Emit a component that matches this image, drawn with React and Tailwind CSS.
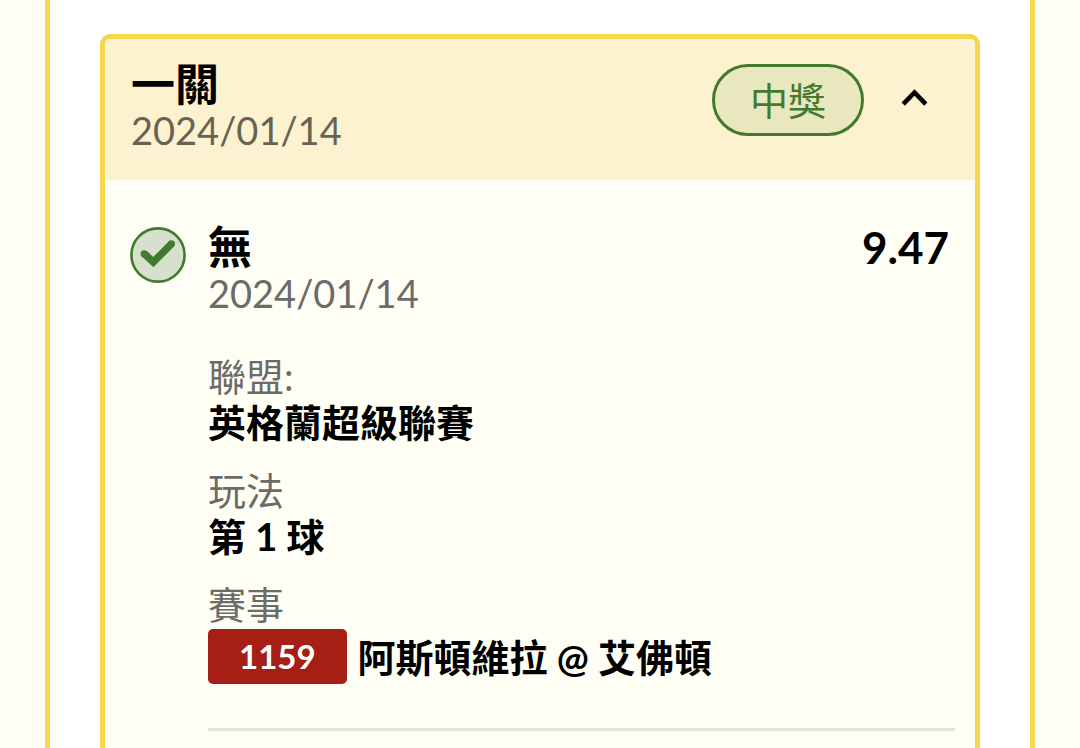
function Chevron() {
  return (
    <svg viewBox="0 0 40 40" className="size-10" fill="none" stroke="#000" strokeWidth="4.6" aria-hidden="true">
      <path d="M8.2 24.2 19.5 12.5 30.8 24.2" />
    </svg>
  );
}

function WonIcon() {
  return (
    <svg viewBox="0 0 56 56" className="size-14 shrink-0" role="img" aria-label="中獎">
      <circle cx="28" cy="28" r="26.6" fill="#d6e0cc" stroke="#427a2d" strokeWidth="2.6" />
      <path d="M14.4 26.8 23.3 35.2 41.3 17" fill="none" stroke="#427a2d" strokeWidth="7.4" />
      <circle cx="14.2" cy="26.8" r="3.6" fill="#427a2d" />
      <circle cx="41.4" cy="16.8" r="3.6" fill="#427a2d" />
    </svg>
  );
}

function Field({ label, children }) {
  return (
    <div>
      <dt className="text-[#6b6b68]">{label}</dt>
      <dd className="font-bold text-black">{children}</dd>
    </div>
  );
}

export default function App() {
  return (
    <div className="flex min-h-screen bg-[#fefef5] px-[45px] font-[Lato,'Noto_Sans_CJK_TC',sans-serif] text-[38px] leading-[46px]">
      <main className="flex flex-1 flex-col border-x-5 border-[#f5d850] bg-white px-[50px] pt-[34px]">
        <section className="flex-1 rounded-t-[10px] border-5 border-b-0 border-[#f5d850] bg-[#fefef5]">
          <header className="flex items-start justify-between rounded-t-[5px] bg-[#fdf2cf] pt-[22px] pr-10 pb-[27px] pl-[26px]">
            <div>
              <h2 className="text-[44px] font-bold text-black">一關</h2>
              <time dateTime="2024-01-14" className="block text-[#666354]">2024/01/14</time>
            </div>
            <div className="flex items-center gap-[31px] pt-[3px]">
              <span className="rounded-full border-3 border-[#427a2d] bg-[#e8e7be] px-[35px] py-[10px] text-[#427a2d]">
                中獎
              </span>
              <button type="button" aria-label="收合" aria-expanded="true">
                <Chevron />
              </button>
            </div>
          </header>
          <div className="flex gap-[22px] pt-11 pr-5 pl-[25px]">
            <div className="pt-[3px]">
              <WonIcon />
            </div>
            <div className="flex-1">
              <div className="flex justify-between pr-[6px] text-[44px] font-bold text-black">
                <h3>無</h3>
                <span>9.47</span>
              </div>
              <time dateTime="2024-01-14" className="block text-[#6b6b68]">2024/01/14</time>
              <dl className="mt-[37px] flex flex-col gap-[22px] border-b-3 border-[#e3e3da] pb-11">
                <Field label="聯盟:">英格蘭超級聯賽</Field>
                <Field label="玩法">第 1 球</Field>
                <Field label="賽事">
                  <span className="flex items-center gap-[11px] pt-0.5">
                    <span className="rounded-[5px] bg-[#a51f17] px-[31px] py-[5px] text-[33px] leading-[45px] text-white">1159</span>
                    <span>阿斯頓維拉 @ 艾佛頓</span>
                  </span>
                </Field>
              </dl>
            </div>
          </div>
        </section>
      </main>
    </div>
  );
}
